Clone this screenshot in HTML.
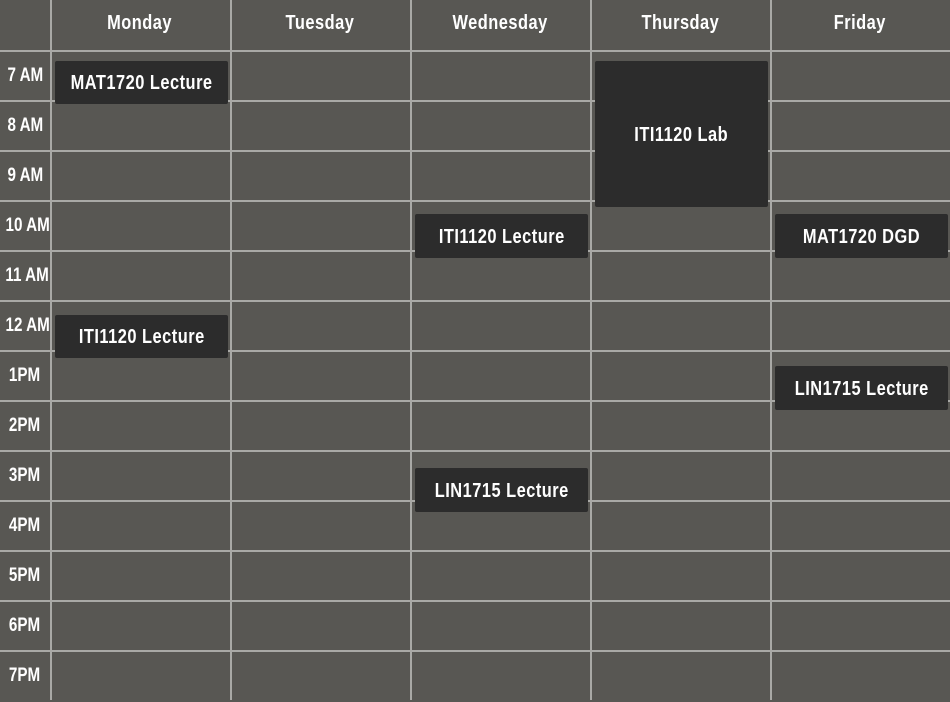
<!DOCTYPE html><html><head><style>
body{margin:0;width:950px;height:700px;background:#585753;position:relative;overflow:hidden;font-family:"Liberation Sans",sans-serif;font-weight:bold;color:#fff}
.v{position:absolute;top:0;width:2px;height:700px;background:#a9a9a6}
.h{position:absolute;left:0;height:2px;width:950px;background:#a9a9a6}
.d{position:absolute;top:0;height:50px;width:180px;line-height:46px;text-align:center;font-size:20px;white-space:nowrap}
.t{position:absolute;left:0;width:50px;height:50px;line-height:52px;text-align:center;font-size:19px;white-space:nowrap}
.e{position:absolute;width:173px;background:#2c2c2c;border-radius:2px;display:flex;align-items:center;justify-content:center;font-size:20px;white-space:nowrap;padding-top:2px;box-sizing:border-box}
span{display:inline-block;transform:scaleX(0.82);letter-spacing:0.6px}
.t span{transform:scaleX(0.8);letter-spacing:0}
</style></head><body>
<div class="v" style="left:50px"></div><div class="v" style="left:230px"></div><div class="v" style="left:410px"></div><div class="v" style="left:590px"></div><div class="v" style="left:770px"></div>
<div class="h" style="top:50px"></div><div class="h" style="top:100px"></div><div class="h" style="top:150px"></div><div class="h" style="top:200px"></div><div class="h" style="top:250px"></div><div class="h" style="top:300px"></div><div class="h" style="top:350px"></div><div class="h" style="top:400px"></div><div class="h" style="top:450px"></div><div class="h" style="top:500px"></div><div class="h" style="top:550px"></div><div class="h" style="top:600px"></div><div class="h" style="top:650px"></div>
<div class="d" style="left:50px"><span>Monday</span></div><div class="d" style="left:230px"><span>Tuesday</span></div><div class="d" style="left:410px"><span>Wednesday</span></div><div class="d" style="left:590px"><span>Thursday</span></div><div class="d" style="left:770px"><span>Friday</span></div>
<div class="t" style="top:50px"><span>7 AM</span></div><div class="t" style="top:100px"><span>8 AM</span></div><div class="t" style="top:150px"><span>9 AM</span></div><div class="t" style="top:200px"><span>10 AM</span></div><div class="t" style="top:250px"><span>11 AM</span></div><div class="t" style="top:300px"><span>12 AM</span></div><div class="t" style="top:350px"><span>1PM</span></div><div class="t" style="top:400px"><span>2PM</span></div><div class="t" style="top:450px"><span>3PM</span></div><div class="t" style="top:500px"><span>4PM</span></div><div class="t" style="top:550px"><span>5PM</span></div><div class="t" style="top:600px"><span>6PM</span></div><div class="t" style="top:650px"><span>7PM</span></div>
<div class="e" style="left:55px;top:61px;height:43px"><span>MAT1720 Lecture</span></div>
<div class="e" style="left:595px;top:61px;height:146px"><span>ITI1120 Lab</span></div>
<div class="e" style="left:415px;top:214px;height:44px"><span>ITI1120 Lecture</span></div>
<div class="e" style="left:775px;top:214px;height:44px"><span>MAT1720 DGD</span></div>
<div class="e" style="left:55px;top:315px;height:43px"><span>ITI1120 Lecture</span></div>
<div class="e" style="left:775px;top:366px;height:44px"><span>LIN1715 Lecture</span></div>
<div class="e" style="left:415px;top:468px;height:44px"><span>LIN1715 Lecture</span></div>
</body></html>
